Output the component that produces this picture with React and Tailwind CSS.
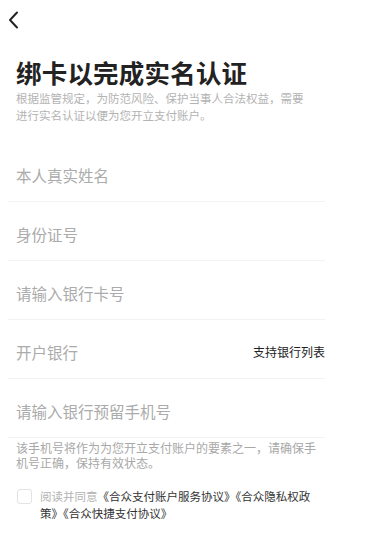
const fields = [
  { label: '本人真实姓名' },
  { label: '身份证号' },
  { label: '请输入银行卡号' },
  { label: '开户银行', extra: '支持银行列表' },
  { label: '请输入银行预留手机号' },
];

export default function App() {
  return (
    <div
      className="min-h-screen bg-white text-[#1c1c1e]"
      style={{ fontFamily: '"Noto Sans CJK SC", "Noto Sans", sans-serif' }}
    >
      {/* nav bar — back arrow */}
      <div className="h-[40px] pt-[11px] pl-[7px]">
        <svg width="14" height="18" viewBox="0 0 14 18" fill="none">
          <polyline points="10,1.5 3,9 10,16.5" stroke="#1f1f1f" strokeWidth="1.9" strokeLinecap="round" strokeLinejoin="round" />
        </svg>
      </div>

      <div className="px-[16px] pt-[17px]">
        <h1 className="text-[25.5px] leading-[30px] font-bold tracking-[0.2px] text-[#222]">绑卡以完成实名认证</h1>
        <p className="mt-[3px] text-[11.5px] leading-[16.5px] text-[#b3b3b3] pr-[40px]">
          根据监管规定，为防范风险、保护当事人合法权益，需要进行实名认证以便为您开立支付账户。
        </p>
      </div>

      {/* form rows */}
      <div className="mx-[8px] w-[317px] mt-[20px]">
        {fields.map((f) => (
          <div
            key={f.label}
            className="flex items-center justify-between pl-[8px] pt-[21px] pb-[15px] border-b border-[#f2f2f2]"
          >
            <span className="text-[15.5px] leading-[22px] text-[#ababab]">{f.label}</span>
            {f.extra && <span className="text-[12px] leading-[22px] text-[#222]">{f.extra}</span>}
          </div>
        ))}
      </div>

      <p className="mt-[2px] px-[16px] pr-[50px] text-[12px] leading-[15px] text-[#a8a8a8]">
        该手机号将作为为您开立支付账户的要素之一，请确保手机号正确，保持有效状态。
      </p>

      {/* agreement */}
      <div className="mt-[18px] flex items-start pl-[17px] pr-[46px]">
        <div className="w-[15px] h-[15px] shrink-0 rounded-[3px] border border-[#e3e3e3] mt-[1px]" />
        <p className="ml-[8px] text-[11.5px] leading-[17px] text-[#333]">
          <span className="text-[#b3b3b3]">阅读并同意</span>《合众支付账户服务协议》《合众隐私权政策》《合众快捷支付协议》
        </p>
      </div>
    </div>
  );
}
